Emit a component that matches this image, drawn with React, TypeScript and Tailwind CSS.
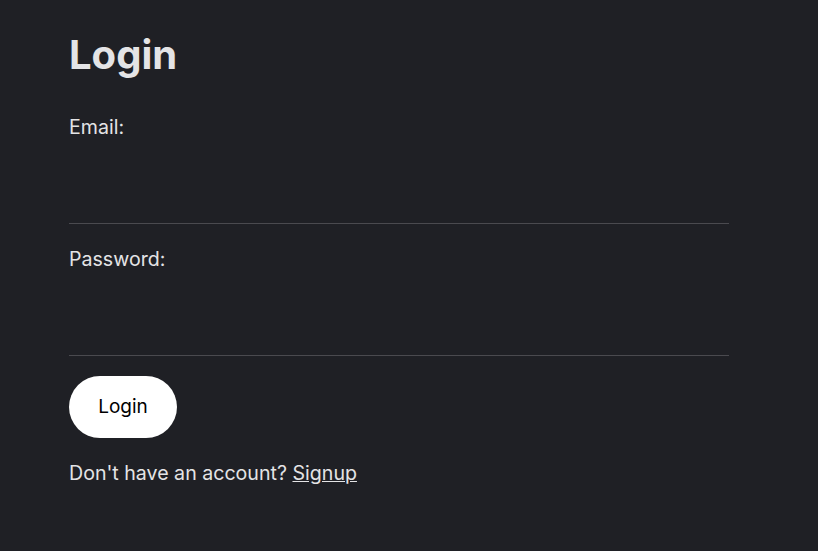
import React, { useState } from 'react';

const App: React.FC = () => {
  const [email, setEmail] = useState('');
  const [password, setPassword] = useState('');

  const handleSubmit = (e: React.FormEvent) => {
    e.preventDefault();
  };

  return (
    <div className="min-h-screen w-full bg-[#1f2025] text-[#e4e4e6] font-['Inter',sans-serif]">
      <div className="w-[660px] ml-[69px] pt-[31px]">
        <h1 className="text-[40px] leading-[48px] font-bold mb-[33px]">Login</h1>
        <form onSubmit={handleSubmit}>
          <label htmlFor="email" className="block text-[19.6px] leading-[30px]">
            Email:
          </label>
          <input
            id="email"
            type="email"
            value={email}
            onChange={(e) => setEmail(e.target.value)}
            className="block w-full h-[82px] bg-transparent border-b border-[#4a4a4f] outline-none text-[19.6px] mb-[20px]"
          />
          <label htmlFor="password" className="block text-[19.6px] leading-[30px]">
            Password:
          </label>
          <input
            id="password"
            type="password"
            value={password}
            onChange={(e) => setPassword(e.target.value)}
            className="block w-full h-[82px] bg-transparent border-b border-[#4a4a4f] outline-none text-[19.6px] mb-[20px]"
          />
          <button
            type="submit"
            className="block h-[62px] w-[108px] rounded-full bg-white text-black text-[19px]"
          >
            Login
          </button>
        </form>
        <p className="mt-[20px] text-[19.6px] leading-[30px]">
          Don't have an account?{' '}
          <a href="#" className="underline">
            Signup
          </a>
        </p>
      </div>
    </div>
  );
};

export default App;
